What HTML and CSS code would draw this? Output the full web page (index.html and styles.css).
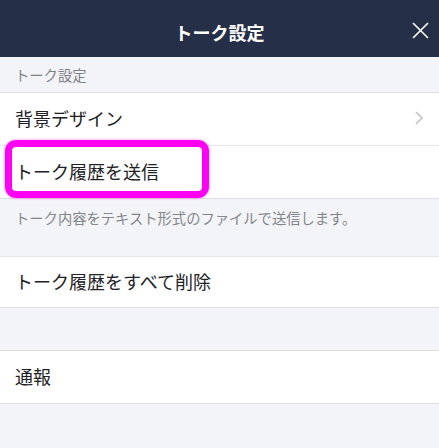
FILE: index.html
```html
<!DOCTYPE html>
<html lang="ja">
<head>
    <meta charset="UTF-8">
    <meta name="viewport" content="width=device-width, initial-scale=1.0">
    <title>トーク設定</title>
    <link rel="stylesheet" href="styles.css">
</head>
<body>
    <header class="top-bar">
        <h1>トーク設定</h1>
        <button class="close-btn" aria-label="閉じる">
            <svg width="17" height="17" viewBox="0 0 17 17">
                <path d="M1 1 L16 16 M16 1 L1 16" stroke="#fff" stroke-width="1.6" fill="none"/>
            </svg>
        </button>
    </header>

    <div class="section-label">トーク設定</div>

    <div class="group">
        <div class="row">
            <span>背景デザイン</span>
            <svg class="chevron" width="8" height="14" viewBox="0 0 8 14">
                <path d="M1 1 L7 7 L1 13" stroke="#c4c4c8" stroke-width="1.6" fill="none"/>
            </svg>
        </div>
        <div class="row highlight-wrap">
            <span>トーク履歴を送信</span>
            <div class="highlight"></div>
        </div>
    </div>
    <p class="note">トーク内容をテキスト形式のファイルで送信します。</p>

    <div class="group">
        <div class="row row-short">
            <span>トーク履歴をすべて削除</span>
        </div>
    </div>

    <div class="spacer"></div>

    <div class="group">
        <div class="row">
            <span>通報</span>
        </div>
    </div>
</body>
</html>
```

FILE: styles.css
```css
* {
    margin: 0;
    padding: 0;
    box-sizing: border-box;
    font-family: "Noto Sans CJK JP", "Noto Sans", sans-serif;
}

body {
    background: #f3f4f7;
    width: 439px;
    height: 448px;
    overflow: hidden;
}

.top-bar {
    height: 57px;
    background: #262f48;
    display: flex;
    align-items: center;
    justify-content: center;
    position: relative;
}

.top-bar h1 {
    color: #fff;
    font-size: 18px;
    font-weight: bold;
    margin-top: 6px;
}

.close-btn {
    position: absolute;
    right: 10px;
    top: 22px;
    background: none;
    border: none;
    width: 17px;
    height: 17px;
    display: flex;
}

.section-label {
    height: 36px;
    padding: 0 15px;
    display: flex;
    align-items: center;
    font-size: 14.3px;
    color: #808088;
    border-bottom: 1px solid #dedee2;
}

.group {
    background: #fff;
    border-bottom: 1px solid #dedee2;
}

.spacer + .group {
    border-top: 1px solid #dedee2;
}

.row {
    height: 53px;
    padding: 0 15px 2px;
    display: flex;
    align-items: center;
    justify-content: space-between;
    font-size: 18px;
    color: #222226;
    border-bottom: 1px solid #e6e6e9;
}

.row:last-child {
    height: 52px;
    border-bottom: none;
}

.row.row-short {
    height: 50px;
}

.chevron {
    margin-right: 1px;
}

.highlight-wrap {
    position: relative;
}

.highlight {
    position: absolute;
    left: 5px;
    top: -6px;
    width: 204px;
    height: 58px;
    border: 7px solid #ff00f5;
    border-radius: 11px;
    box-shadow: 0 0 3px rgba(255, 0, 245, 0.5);
}

.note {
    height: 58px;
    padding: 8px 15px 0;
    font-size: 14.3px;
    color: #85858c;
    border-bottom: 1px solid #e6e6e9;
}

.spacer {
    height: 42px;
}
```
